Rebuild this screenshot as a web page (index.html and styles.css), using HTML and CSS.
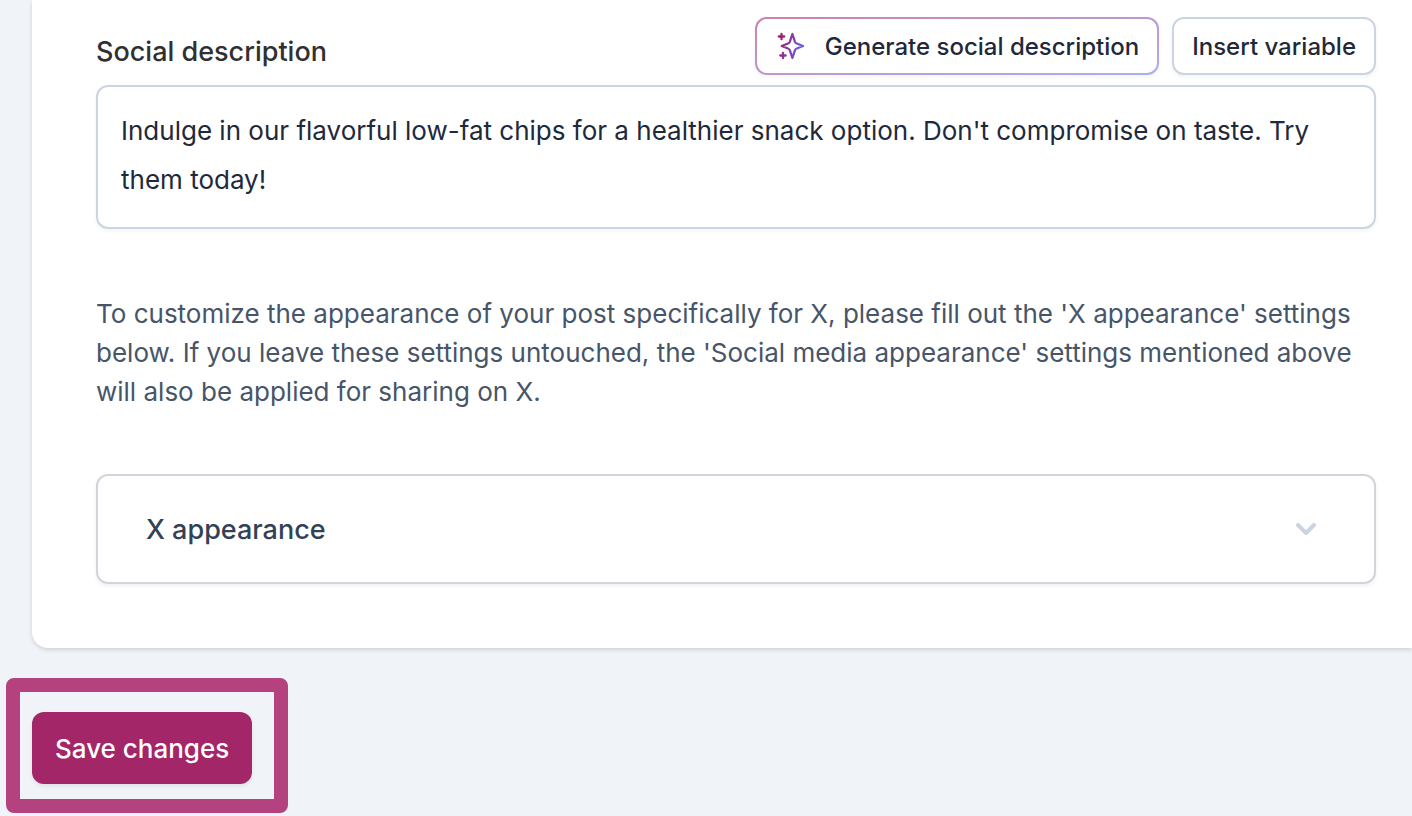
FILE: index.html
```html
<!DOCTYPE html>
<html lang="en">

<head>
    <meta charset="UTF-8">
    <meta name="viewport" content="width=device-width, initial-scale=1">
    <title>Social media appearance</title>
    <link rel="stylesheet" href="styles.css">
</head>

<body>
    <form>
        <div class="card">
            <div class="field-header">
                <label for="social-description">Social description</label>
                <div class="field-buttons">
                    <button type="button" class="btn btn-ai">
                        <svg class="sparkles" viewBox="0 0 28 28" fill="none" stroke-width="2.3" stroke-linecap="round" stroke-linejoin="round" aria-hidden="true">
                            <defs>
                                <linearGradient id="sparkle" gradientUnits="userSpaceOnUse" x1="3" y1="9" x2="27" y2="17">
                                    <stop offset="0" stop-color="#a61e69" />
                                    <stop offset="1" stop-color="#6366f1" />
                                </linearGradient>
                            </defs>
                            <path stroke="url(#sparkle)" d="M4.500 1.800V7.200M1.800 4.500H7.200M6 20.800V26.200M3.300 23.500H8.700M15.400 2L18 9.800Q18.500 11.100 19.800 11.500L26 14L19.800 16.500Q18.500 16.900 18 18.200L15.400 26L12.800 18.200Q12.300 16.900 11 16.500L4.800 14L11 11.500Q12.300 11.100 12.800 9.800Z" />
                        </svg>
                        Generate social description
                    </button>
                    <button type="button" class="btn">Insert variable</button>
                </div>
            </div>
            <textarea id="social-description" rows="2">Indulge in our flavorful low-fat chips for a healthier snack option. Don't compromise on taste. Try them today!</textarea>

            <p class="hint">To customize the appearance of your post specifically for X, please fill out the 'X appearance' settings below. If you leave these settings untouched, the 'Social media appearance' settings mentioned above will also be applied for sharing on X.</p>

            <button type="button" class="accordion" aria-expanded="false">
                X appearance
                <svg class="chevron" viewBox="0 0 20 12" fill="none" stroke="#cbd5e1" stroke-width="4" stroke-linecap="round" stroke-linejoin="round" aria-hidden="true">
                    <path d="M2 2L10 10L18 2" />
                </svg>
            </button>
        </div>

        <div class="save-highlight">
            <button type="submit" class="btn-save">Save changes</button>
        </div>
    </form>
</body>

</html>
```

FILE: styles.css
```css
* {
    box-sizing: border-box;
}

body {
    margin: 0;
    background-color: #f0f3f8;
    font-family: Inter, "Liberation Sans", sans-serif;
    font-size: 26px;
    color: #1e293b;
}

button,
textarea {
    font: inherit;
    color: inherit;
}

button {
    cursor: pointer;
}

/* the card runs off the right edge of the window */
.card {
    margin-left: 32px;
    padding: 17px 36px 64px 64px;
    background-color: #fff;
    border-bottom-left-radius: 16px;
    box-shadow: 0 2px 4px rgba(0, 0, 0, 0.14);
}

.field-header {
    display: flex;
    justify-content: space-between;
    align-items: center;
    margin-bottom: 10px;
}

.field-header label {
    padding-top: 10px;
    font-size: 27px;
    font-weight: 500;
    color: #303030;
}

.field-buttons {
    display: flex;
    gap: 13px;
}

.btn {
    display: flex;
    align-items: center;
    height: 58px;
    padding: 0 18px;
    background-color: #fff;
    border: 2px solid #cbd5e1;
    border-radius: 12px;
    box-shadow: 0 2px 4px rgba(15, 23, 42, 0.05);
    font-size: 24px;
    font-weight: 500;
}

.btn-ai {
    gap: 20px;
    padding-left: 20px;
    border-color: transparent;
    background: linear-gradient(#fff, #fff) padding-box,
        linear-gradient(to bottom right, #cd82ac, #a9b0ef) border-box;
}

.sparkles {
    width: 28px;
    height: 28px;
}

textarea {
    display: block;
    width: 100%;
    padding: 19px 23px 23px;
    border: 2px solid #cbd5e1;
    border-radius: 12px;
    box-shadow: 0 2px 4px rgba(15, 23, 42, 0.05);
    line-height: 49px;
    resize: none;
    overflow: hidden;
}

.hint {
    margin: 65px 0 63px;
    line-height: 39px;
    color: #475569;
}

.accordion {
    display: flex;
    justify-content: space-between;
    align-items: center;
    width: 100%;
    height: 110px;
    padding: 0 58px 0 48px;
    background-color: #fff;
    border: 2px solid #d1d5db;
    border-radius: 12px;
    box-shadow: 0 2px 4px rgba(0, 0, 0, 0.06);
    font-size: 27px;
    font-weight: 500;
    color: #334155;
}

.chevron {
    width: 20px;
    height: 12px;
}

.save-highlight {
    width: fit-content;
    margin: 30px 0 3px 6px;
    padding: 20px 22px 15px 12px;
    border: 14px solid #b4427f;
    border-radius: 8px;
}

.btn-save {
    display: block;
    height: 72px;
    padding: 0 23px;
    background-color: #a32668;
    border: 0;
    border-radius: 12px;
    box-shadow: 0 2px 4px rgba(0, 0, 0, 0.08);
    font-weight: 500;
    color: #fff;
}
```
